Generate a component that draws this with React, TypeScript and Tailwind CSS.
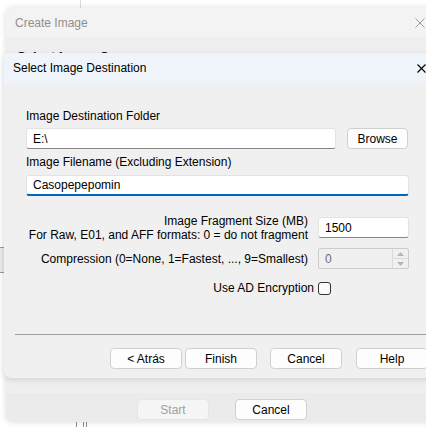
import React from 'react';

const font = { fontFamily: '"Liberation Sans", Arial, sans-serif' };

function Btn({ children, className = 'w-[72px]' }: { children: React.ReactNode; className?: string }) {
  return (
    <div
      className={`flex h-[21px] shrink-0 items-center justify-center rounded-[4px] border border-[#d0d0d0] bg-[#fdfdfd] text-[12px] text-black ${className}`}
    >
      {children}
    </div>
  );
}

function TextBox({ value, className = '', focused = false }: { value: string; className?: string; focused?: boolean }) {
  return (
    <div
      className={`flex h-[21px] shrink-0 items-center rounded-[3px] border border-[#e3e3e3] bg-white pl-[6px] text-[12px] text-black ${
        focused ? 'border-b-2 border-b-[#0067c0]' : 'border-b-[#868686]'
      } ${className}`}
    >
      {value}
    </div>
  );
}

export default function App() {
  return (
    <div className="relative h-[427px] w-[426px] overflow-hidden bg-white" style={font}>
      {/* desktop bits behind */}
      <div className="absolute left-[80px] top-0 h-[10px] w-px bg-[#dcdcdc]" />
      <div className="absolute left-[76px] top-[420px] h-[8px] w-px bg-[#8a8a8a]" />
      <div className="absolute left-[83px] top-[420px] h-[8px] w-px bg-[#8a8a8a]" />
      <div className="absolute left-[86px] top-[420px] h-[8px] w-px bg-[#8a8a8a]" />
      <div className="absolute left-0 top-[247px] h-[26px] w-[6px] border-y border-[#9a9a9a] bg-[#ececec]" />

      {/* outer window */}
      <div className="absolute left-[6px] top-[8px] flex h-[414px] w-[440px] flex-col overflow-hidden rounded-[7px] bg-[#ebebeb] shadow-[0_0_6px_rgba(0,0,0,0.15)]">
        <div className="flex h-[29px] shrink-0 items-center bg-[#f3f3f3] pl-[9px] text-[12px] text-[#8f8f8f]">
          Create Image
          <svg className="ml-auto mr-[21px]" width="10" height="10" viewBox="0 0 10 10">
            <path d="M0.5 0.5L9.5 9.5M9.5 0.5L0.5 9.5" stroke="#9a9a9a" strokeWidth="1" />
          </svg>
        </div>
        <div className="h-[356px] shrink-0 bg-[#efefef] pl-[11px] pt-[14px]">
          {/* header text of the page behind, mostly covered by the wizard */}
          <div className="h-[2px] overflow-hidden">
            <div className="text-[13px] font-bold leading-[12px] text-black">Select Image Source</div>
          </div>
        </div>
        <div className="flex flex-1 gap-[26px] pl-[131px] pt-[6px]">
          <div className="flex h-[21px] w-[72px] items-center justify-center rounded-[4px] border border-[#e5e5e5] bg-[#f5f5f5] text-[12px] text-[#a0a0a0]">
            Start
          </div>
          <Btn>Cancel</Btn>
        </div>
      </div>

      {/* inner wizard dialog */}
      <div className="absolute left-[4px] top-[53px] flex h-[325px] w-[440px] flex-col rounded-b-[7px] bg-[#f0f0f0] shadow-[0_2px_6px_rgba(0,0,0,0.12)]">
        <div className="flex h-[30px] shrink-0 items-center bg-[#eef4f9] pl-[9px] text-[12px] text-black">
          Select Image Destination
          <svg className="ml-auto mr-[18px]" width="9" height="9" viewBox="0 0 9 9">
            <path d="M0.5 0.5L8.5 8.5M8.5 0.5L0.5 8.5" stroke="#000" strokeWidth="1.1" />
          </svg>
        </div>

        <div className="flex flex-col whitespace-nowrap pl-[22px] pr-[35px] pt-[25px] text-[12px] text-black">
          <div className="h-[16px] leading-[16px]">Image Destination Folder</div>
          <div className="mt-[4px] flex gap-[11px]">
            <TextBox value="E:\" className="w-[310px]" />
            <Btn className="w-[61px]">Browse</Btn>
          </div>
          <div className="mt-[5px] h-[16px] leading-[16px]">Image Filename (Excluding Extension)</div>
          <TextBox value="Casopepepomin" focused className="mt-[5px] h-[20px] w-[383px]" />

          <div className="mt-[18px] flex items-start gap-[10px]">
            <div className="w-[282px] text-right text-[12px] leading-[14px]">
              <div>Image Fragment Size (MB)</div>
              <div>For Raw, E01, and AFF formats: 0 = do not fragment</div>
            </div>
            <TextBox value="1500" className="mt-[3px] h-[20px] w-[91px]" />
          </div>

          <div className="mt-[6px] flex items-center gap-[10px]">
            <div className="w-[282px] text-right">Compression (0=None, 1=Fastest, ..., 9=Smallest)</div>
            <div className="flex h-[21px] w-[91px] items-center rounded-[2px] border border-[#cccccc] bg-[#f0f0f0] pl-[6px] text-[#6d6d6d]">
              0
              <div className="ml-auto flex h-full w-[16px] flex-col border-l border-[#dadada]">
                <div className="flex flex-1 items-center justify-center border-b border-[#dadada]">
                  <svg width="7" height="4" viewBox="0 0 7 4"><path d="M0 4L3.5 0L7 4Z" fill="#b5b5b5" /></svg>
                </div>
                <div className="flex flex-1 items-center justify-center">
                  <svg width="7" height="4" viewBox="0 0 7 4"><path d="M0 0L3.5 4L7 0Z" fill="#b5b5b5" /></svg>
                </div>
              </div>
            </div>
          </div>

          <div className="mt-[10px] flex items-center gap-[4px]">
            <div className="w-[288px] text-right">Use AD Encryption</div>
            <div className="h-[13px] w-[13px] rounded-[3px] border border-[#333] bg-[#fbfbfb]" />
          </div>
        </div>

        <div className="ml-[11px] mt-[37px] h-px bg-[#a0a0a0]" />

        <div className="mt-[13px] flex pl-[106px]">
          <Btn>&lt; Atrás</Btn>
          <Btn className="ml-[3px] w-[72px] border-[#0067c0]">Finish</Btn>
          <Btn className="ml-[13px] w-[72px]">Cancel</Btn>
          <Btn className="ml-[14px] w-[72px]">Help</Btn>
        </div>
      </div>
    </div>
  );
}
